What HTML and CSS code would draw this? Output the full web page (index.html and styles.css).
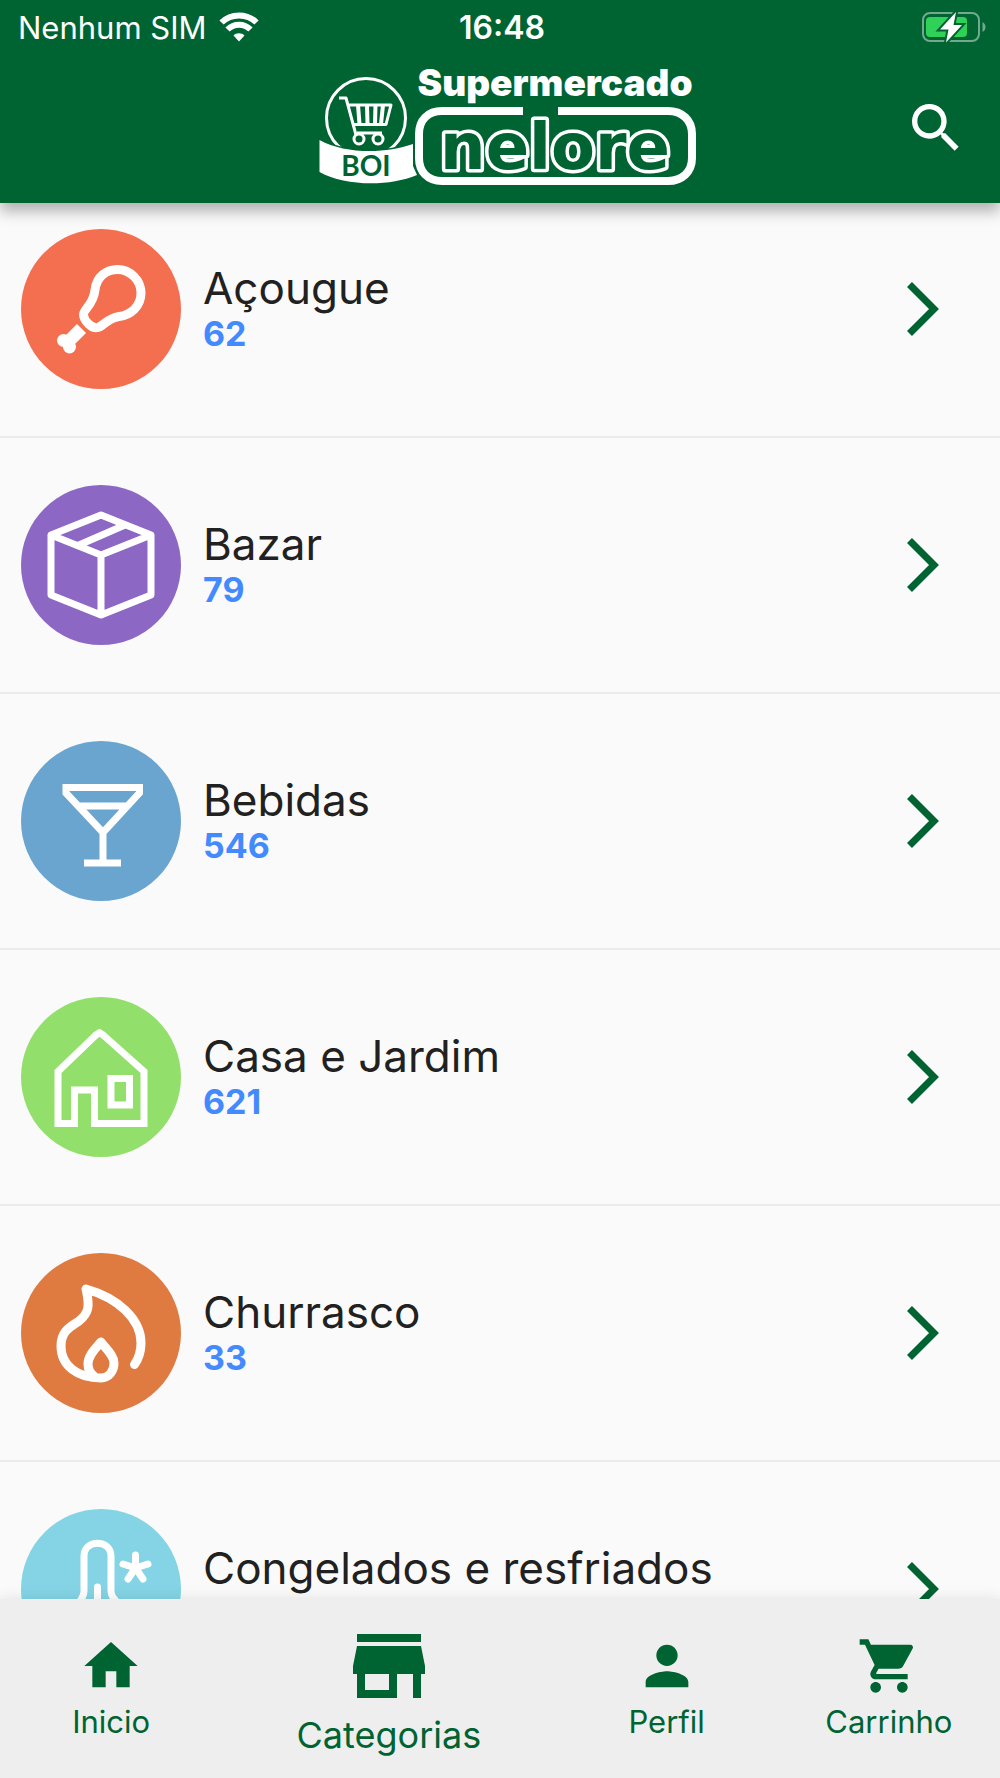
FILE: index.html
```html
<!DOCTYPE html>
<html lang="pt-BR">
<head>
  <meta charset="UTF-8">
  <meta name="viewport" content="width=device-width, initial-scale=1">
  <title>Categorias</title>
  <link rel="stylesheet" href="styles.css">
</head>
<body>

  <header class="header">
    <div class="status">
      <div class="carrier">
        <span>Nenhum SIM</span>
        <svg class="wifi" viewBox="0 0 40 30" fill="none" stroke="#fff" stroke-width="6">
          <path d="M2.500 10.500C12 1 28 1 37.500 10.500"/>
          <path d="M8.500 17.500C15 11 25 11 31.500 17.500"/>
          <path d="M20 29.500L14.500 23.500C17 20.500 23 20.500 25.500 23.500Z" fill="#fff" stroke="none"/>
        </svg>
      </div>
      <span class="time">16:48</span>
      <svg class="battery" viewBox="0 0 64 32">
        <rect x="1" y="2" width="56" height="28" rx="7" fill="none" stroke="#fff" stroke-opacity=".45" stroke-width="2"/>
        <path d="M60.500 11v10c4-2 4-8 0-10z" fill="#fff" fill-opacity=".45"/>
        <rect x="4" y="6" width="41" height="20" rx="4" fill="#30d158"/>
        <path d="M34 1L18 18.500h8.500L24 31.500L40 14h-8.500z" fill="#fff" stroke="#006332" stroke-width="4" paint-order="stroke"/>
      </svg>
    </div>
    <div class="appbar">
      <svg class="logo" viewBox="0 0 400 140" role="img" aria-label="Supermercado Boi Nelore">
        <circle cx="66" cy="58" r="39.500" fill="none" stroke="#fff" stroke-width="3"/>
        <g fill="none" stroke="#fff" stroke-width="3" stroke-linejoin="round">
          <path d="M39 38h7L56 75M49 45H91L86 64.500H54M57 73H82"/>
          <path d="M58 45l1.500 19M67 45l.5 19M75.500 45l-.5 19M83 45l-2 19" stroke-width="4"/>
          <circle cx="59" cy="79" r="5"/>
          <circle cx="78" cy="79" r="5"/>
        </g>
        <path d="M19.500 80C45 94 85 94 113 84V106L117 115C88 127 45 126 19.500 112Z" fill="#fff" stroke="#006332" stroke-width="3" paint-order="stroke"/>
        <text class="logo-boi" x="66" y="116">BOI</text>
        <path d="M223 51H142C128 51 119 60 119 74V98C119 112 128 121 142 121H368C382 121 392 112 392 98V74C392 60 382 51 368 51H258" fill="none" stroke="#fff" stroke-width="8"/>
        <text class="logo-top" x="255" y="36">Supermercado</text>
        <text class="logo-name" x="255" y="109">nelore</text>
      </svg>
      <button class="search" type="button" aria-label="Buscar">
        <svg viewBox="0 0 24 24"><path d="M15.500 14h-.79l-.28-.27A6.471 6.471 0 0 0 16 9.500 6.500 6.500 0 1 0 9.500 16c1.610 0 3.090-.59 4.230-1.570l.27.28v.79l5 4.990L20.490 19l-4.990-5zm-6 0C7.010 14 5 11.990 5 9.500S7.010 5 9.500 5 14 7.010 14 9.500 11.990 14 9.500 14z"/></svg>
      </button>
    </div>
  </header>

  <main class="list">
    <a class="item" href="#acougue">
      <svg class="icon red" viewBox="0 0 160 160">
        <path d="M96.500 40.500C109 40.500 120 51 120 64C120 77 110 86 98 87.500C87 89 82 97 77 98.500C71 100 63 92 62.500 86C62 80 72 77 74 61C75.500 47 86 40.500 96.500 40.500Z" stroke-width="9"/>
        <path class="solid" d="M56 95L65 104L53 116L44 107Z"/>
        <circle class="solid" cx="42.500" cy="111.500" r="6.500"/>
        <circle class="solid" cx="48.500" cy="118" r="6.500"/>
      </svg>
      <div class="info"><span class="name">Açougue</span><span class="count">62</span></div>
      <svg class="arrow" viewBox="0 0 32 54"><path d="M2.500 2.500L27 27L2.500 51.500"/></svg>
    </a>
    <a class="item" href="#bazar">
      <svg class="icon purple" viewBox="0 0 160 160">
        <path d="M80 30L130 50V110L80 130L30 110V50ZM30 50L80 70L130 50M80 70V130M58 60L104 40"/>
      </svg>
      <div class="info"><span class="name">Bazar</span><span class="count">79</span></div>
      <svg class="arrow" viewBox="0 0 32 54"><path d="M2.500 2.500L27 27L2.500 51.500"/></svg>
    </a>
    <a class="item" href="#bebidas">
      <svg class="icon blue" viewBox="0 0 160 160">
        <path class="sharp" d="M45 46.500H118.500V52L82 91.500L45 52ZM57 65H107M82 90V122M63 122H100"/>
      </svg>
      <div class="info"><span class="name">Bebidas</span><span class="count">546</span></div>
      <svg class="arrow" viewBox="0 0 32 54"><path d="M2.500 2.500L27 27L2.500 51.500"/></svg>
    </a>
    <a class="item" href="#casa">
      <svg class="icon green" viewBox="0 0 160 160">
        <path class="sharp" d="M76 37L37 74.500V126.500H53.500V93H73.500V126.500H123V74.500L81 37M90 81.500H108.500V108H90Z"/>
        <path d="M75 38L78.500 35.500L82 38"/>
      </svg>
      <div class="info"><span class="name">Casa e Jardim</span><span class="count">621</span></div>
      <svg class="arrow" viewBox="0 0 32 54"><path d="M2.500 2.500L27 27L2.500 51.500"/></svg>
    </a>
    <a class="item" href="#churrasco">
      <svg class="icon orange" viewBox="0 0 160 160">
        <path d="M113.500 111.500C118 105 120 99 120 90C120 66 97 45 65 36C69 53 68 60 58 68C51 73 40 77 40 93C40 113 57 125 80 125C88 125 93 118 93 110C93 102 84 95 80 89C75 95 67 102 67 111C67 116 69 120 73 123" stroke-width="9"/>
      </svg>
      <div class="info"><span class="name">Churrasco</span><span class="count">33</span></div>
      <svg class="arrow" viewBox="0 0 32 54"><path d="M2.500 2.500L27 27L2.500 51.500"/></svg>
    </a>
    <a class="item" href="#congelados">
      <svg class="icon cyan" viewBox="0 0 160 160">
        <path d="M59 92C62 88 63 86 63 82V47C63 30 90 30 90 47V82C90 86 91 88 95 92M76.500 78V110"/>
        <path d="M114.500 59V46M114.500 59L102 55M114.500 59L127 55M114.500 59L107 70M114.500 59L122 70"/>
      </svg>
      <div class="info"><span class="name">Congelados e resfriados</span></div>
      <svg class="arrow" viewBox="0 0 32 54"><path d="M2.500 2.500L27 27L2.500 51.500"/></svg>
    </a>
  </main>

  <nav class="nav">
    <a href="#inicio">
      <svg viewBox="0 0 24 24"><path d="M10 20v-6h4v6h5v-8h3L12 3 2 12h3v8z"/></svg>
      <span>Inicio</span>
    </a>
    <a class="active" href="#categorias">
      <svg viewBox="0 0 24 24"><path d="M20 4H4v2h16V4zm1 10v-2l-1-5H4l-1 5v2h1v6h10v-6h4v6h2v-6h1zm-9 4H6v-4h6v4z"/></svg>
      <span>Categorias</span>
    </a>
    <a href="#perfil">
      <svg viewBox="0 0 24 24"><path d="M12 12c2.210 0 4-1.790 4-4s-1.790-4-4-4-4 1.790-4 4 1.790 4 4 4zm0 2c-2.670 0-8 1.340-8 4v2h16v-2c0-2.660-5.330-4-8-4z"/></svg>
      <span>Perfil</span>
    </a>
    <a href="#carrinho">
      <svg viewBox="0 0 24 24"><path d="M7 18c-1.100 0-1.990.9-1.990 2S5.900 22 7 22s2-.9 2-2-.9-2-2-2zM1 2v2h2l3.600 7.590-1.350 2.450c-.16.28-.25.61-.25.96 0 1.100.9 2 2 2h12v-2H7.420c-.14 0-.25-.11-.25-.25l.03-.12.9-1.630h7.450c.75 0 1.410-.41 1.750-1.030l3.580-6.490A1 1 0 0 0 20 4H5.210l-.94-2H1zm16 16c-1.100 0-1.990.9-1.990 2s.89 2 1.990 2 2-.9 2-2-.9-2-2-2z"/></svg>
      <span>Carrinho</span>
    </a>
  </nav>

</body>
</html>
```
FILE: styles.css
```css
* {
  box-sizing: border-box;
}
body {
  margin: 0;
  height: 100vh;
  display: flex;
  flex-direction: column;
  font-family: Inter, "Liberation Sans", sans-serif;
  background: #fafafa;
  color: #212121;
}
a {
  color: inherit;
  text-decoration: none;
}

/* header */
.header {
  position: relative;
  z-index: 1;
  flex: none;
  background: #006332;
  color: #fff;
  box-shadow: 0 8px 14px rgba(0,0,0,0.3);
}
.status {
  display: grid;
  grid-template-columns: 1fr auto 1fr;
  align-items: center;
  height: 54px;
  padding: 0 14px 0 18px;
  font-size: 31px;
}
.carrier {
  display: flex;
  align-items: center;
  gap: 12px;
}
.wifi {
  width: 40px;
  height: 30px;
}
.time {
  font-size: 32px;
  font-weight: 600;
}
.battery {
  justify-self: end;
  width: 64px;
  height: 32px;
}
.appbar {
  display: grid;
  grid-template-columns: 1fr auto 1fr;
  align-items: center;
  height: 149px;
  padding: 0 32px;
}
.logo {
  grid-column: 2;
  width: 400px;
  height: 140px;
  margin-top: 3px;
}
.logo text {
  text-anchor: middle;
  fill: #fff;
}
.logo .logo-top {
  font-size: 37px;
  font-weight: 900;
}
.logo .logo-boi {
  font: 700 28px Lato, sans-serif;
  fill: #006332;
}
.logo .logo-name {
  font: 700 64px "DejaVu Sans", sans-serif;
  fill: #006332;
  stroke: #fff;
  stroke-width: 7px;
  stroke-linejoin: round;
  paint-order: stroke;
}
.search {
  justify-self: end;
  width: 64px;
  height: 64px;
  margin-bottom: 2px;
  padding: 0;
  border: none;
  background: none;
  cursor: pointer;
}
.search svg {
  display: block;
  fill: #fff;
}

/* category list */
.list {
  flex: 1;
  min-height: 0;
  overflow-y: auto;
  scrollbar-width: none;
}
.item {
  display: flex;
  align-items: center;
  gap: 22px;
  padding: 47px 61px 47px 21px;
  border-bottom: 2px solid #ebebeb;
}
.item:first-child {
  padding-top: 26px;
}
.icon {
  flex: none;
  width: 160px;
  height: 160px;
  border-radius: 50%;
  fill: none;
  stroke: #fff;
  stroke-width: 7;
  stroke-linejoin: round;
  stroke-linecap: round;
}
.icon .sharp {
  stroke-linejoin: miter;
  stroke-linecap: butt;
}
.icon .solid {
  fill: #fff;
  stroke: none;
}
.red { background: #f46e50; }
.purple { background: #8c68c4; }
.blue { background: #6aa5d0; }
.green { background: #92df6b; }
.orange { background: #df7b40; }
.cyan { background: #84d4e6; }
.info {
  flex: 1;
  display: flex;
  flex-direction: column;
  min-height: 92px;
}
.name {
  font-size: 44px;
  line-height: 50px;
}
.count {
  font-size: 34px;
  font-weight: 700;
  line-height: 42px;
  color: #448aff;
}
.arrow {
  flex: none;
  width: 32px;
  height: 54px;
  fill: none;
  stroke: #006332;
  stroke-width: 7;
}

/* bottom bar */
.nav {
  position: relative;
  flex: none;
  display: flex;
  height: 179px;
  background: #eee;
  color: #006332;
  box-shadow: 0 0 14px rgba(0,0,0,0.1);
}
.nav a {
  flex: 2;
  display: flex;
  flex-direction: column;
  align-items: center;
  justify-content: center;
  gap: 6px;
  padding-bottom: 4px;
  font-size: 31px;
  line-height: 36px;
}
.nav svg {
  width: 64px;
  height: 64px;
  fill: #006332;
}
.nav .active {
  flex: 3;
  gap: 0;
  font-size: 36px;
  line-height: 42px;
}
.nav .active svg {
  width: 96px;
  height: 96px;
}
```
